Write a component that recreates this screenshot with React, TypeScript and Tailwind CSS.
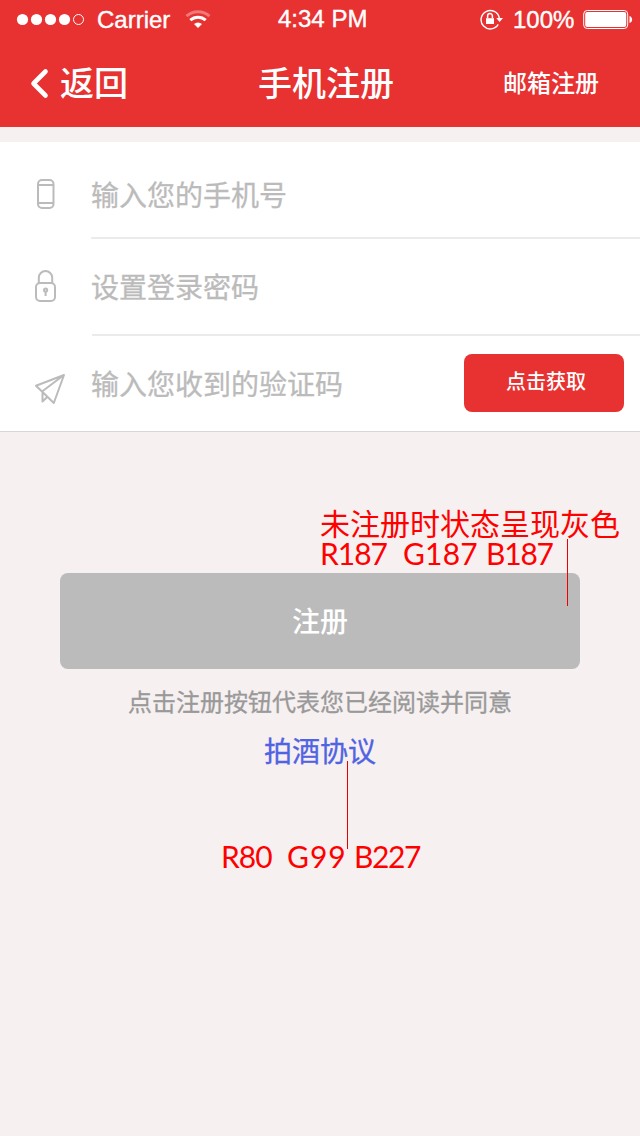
import React from 'react';

function StatusBar() {
  return (
    <div className="flex h-10 items-center whitespace-nowrap font-['Liberation_Sans',sans-serif] text-[24px] leading-[40px]">
      <svg className="ml-4 h-10 w-[70px] shrink-0" viewBox="0 0 70 40" fill="white">
        <circle cx="6.5" cy="19.5" r="5.6" />
        <circle cx="20.5" cy="19.5" r="5.6" />
        <circle cx="34.5" cy="19.5" r="5.6" />
        <circle cx="48.5" cy="19.5" r="5.6" />
        <circle cx="62.5" cy="19.5" r="5" fill="none" stroke="white" />
      </svg>
      <span className="ml-[11px] w-[88px] shrink-0 [-webkit-text-stroke:0.4px_white]">Carrier</span>
      <svg className="h-10 w-[26px] shrink-0" viewBox="0 0 26 40" fill="none" stroke="white">
        <path d="M1.5 16.2a17 17 0 0 1 23 0" strokeWidth="3" opacity=".35" />
        <path d="M5.3 20.2a11.5 11.5 0 0 1 15.4 0" strokeWidth="3" />
        <path d="M9 24.1a6 6 0 0 1 8 0L13 28z" fill="white" stroke="none" />
      </svg>
      <span className="-mt-0.5 ml-[67px] w-[202px] shrink-0 [-webkit-text-stroke:0.4px_white]">4:34 PM</span>
      <svg className="h-10 w-6 shrink-0" viewBox="0 0 24 40" fill="none" stroke="white" strokeWidth="1.4">
        <path d="M18.2 24.4A9.2 9.2 0 1 1 19.3 18" />
        <path d="M16.3 18H23l-3.4 4z" fill="white" stroke="none" />
        <path d="M6 18.2h8v5.8H6z" fill="white" stroke="none" />
        <path d="M7.6 18v-2a2.4 2.4 0 0 1 4.8 0v2" strokeWidth="1.5" />
      </svg>
      <span className="ml-[9px] w-[70px] shrink-0 [-webkit-text-stroke:0.4px_white]">100%</span>
      <svg className="h-10 w-[51px] shrink-0" viewBox="0 0 51 40" fill="white">
        <rect x=".7" y="10.5" width="44" height="18" rx="3.5" fill="none" stroke="white" />
        <rect x="2.2" y="12" width="41" height="15" rx="2" />
        <path d="M46.5 16c3.5 1 3.5 6 0 7z" />
      </svg>
    </div>
  );
}

function PhoneIcon() {
  return (
    <svg className="h-8 w-8" viewBox="0 0 32 32" fill="none" stroke="#bbb" strokeWidth="2">
      <rect x="4" y="2" width="15.5" height="28" rx="4" />
      <path d="M4 7h15.5M4 25h15.5" />
    </svg>
  );
}

function LockIcon() {
  return (
    <svg className="h-9 w-8" viewBox="0 0 32 36" fill="none" stroke="#bbb" strokeWidth="2">
      <rect x="2" y="15" width="19" height="18" rx="4" />
      <path d="M4.8 15V9.7a6.7 6.7 0 0 1 13.4 0V15" />
      <circle cx="11.6" cy="22" r="1.6" />
      <path d="M11.6 23.5V28" />
    </svg>
  );
}

function PlaneIcon() {
  return (
    <svg className="h-8 w-8" viewBox="0 0 32 32" fill="none" stroke="#bbb" strokeWidth="2" strokeLinejoin="round">
      <path d="M2 12.8L30 2 19.8 30 8 18.5zM8 18.5L30 2M8.5 18.5v10l4.7-4.5" />
    </svg>
  );
}

function Field({ icon, children }: { icon: React.ReactNode; children: React.ReactNode }) {
  return (
    <>
      <div className="flex w-[91px] shrink-0 pl-[34px]">{icon}</div>
      <span className="text-[28px] leading-[40px] text-[#bbb] [-webkit-text-stroke:0.3px_#bbb]">{children}</span>
    </>
  );
}

export default function App() {
  return (
    <div className="flex h-[1136px] w-[640px] flex-col overflow-hidden bg-[#f6f0f0] font-['Noto_Sans_CJK_SC',sans-serif] relative">
      <header className="h-[127px] shrink-0 bg-[#e83131] text-white">
        <StatusBar />
        <nav className="flex h-[87px] items-start pt-[17px] font-medium">
          <div className="flex w-[258px] items-center pl-[30px] text-[34px] leading-[50px]">
            <svg className="mr-[11px] h-[50px] w-[19px]" viewBox="0 0 19 50" fill="none" stroke="white" strokeWidth="4.6" strokeLinecap="round" strokeLinejoin="round">
              <path d="M15.5 14.5L3.5 26.5 15.5 38.5" />
            </svg>
            返回
          </div>
          <h1 className="w-[245px] text-[34px] font-medium leading-[50px]">手机注册</h1>
          <span className="text-[24px] leading-[50px]">邮箱注册</span>
        </nav>
      </header>

      <section className="mt-[15px] flex h-[290px] shrink-0 flex-col border-b border-[#d9d6d6] bg-white">
        <div className="flex h-[97px] items-center pt-[7px]">
          <Field icon={<PhoneIcon />}>输入您的手机号</Field>
        </div>
        <div className="ml-[91px] h-0.5 w-[549px] -translate-y-0.5 bg-[#ebebeb]" />
        <div className="flex h-[95px] items-center pb-[6px]">
          <Field icon={<LockIcon />}>设置登录密码</Field>
        </div>
        <div className="ml-[92px] h-0.5 w-[548px] -translate-y-0.5 bg-[#ebebeb]" />
        <div className="flex h-[93px] items-center pb-[4px]">
          <div className="flex w-[91px] shrink-0 pl-[34px] pt-[12px]"><PlaneIcon /></div>
          <span className="w-[373px] text-[28px] leading-[40px] text-[#bbb] [-webkit-text-stroke:0.3px_#bbb]">输入您收到的验证码</span>
          <button className="h-[58px] w-40 rounded-lg bg-[#e83131] pb-[3px] pl-1 text-[20px] font-medium text-white">点击获取</button>
        </div>
      </section>

      <main className="flex flex-col items-center pt-[141px]">
        <button className="h-24 w-[520px] rounded-lg bg-[#bbb] pb-[3px] text-[28px] font-medium text-white">注册</button>
        <p className="mt-[14px] text-[24px] leading-[36px] text-[#999] [-webkit-text-stroke:0.3px_#999]">点击注册按钮代表您已经阅读并同意</p>
        <a className="mt-[11px] text-[28px] leading-[40px] text-[#5063e3] [-webkit-text-stroke:0.3px_#5063e3]">拍酒协议</a>
      </main>

      <div className="absolute left-[320px] top-[502px] whitespace-nowrap text-[30px] text-[#ff0000]">
        <div className="leading-[40px]">未注册时状态呈现灰色</div>
        <div className="-mt-[4px] flex font-['Lato',sans-serif] leading-[30px]">
          <span className="w-[83px] tracking-[-1px]">R187</span>
          <span className="w-[83px] tracking-[0.2px]">G187</span>
          <span className="tracking-[-1.2px]">B187</span>
        </div>
      </div>
      <div className="absolute left-[567px] top-[539px] h-[67px] w-px bg-[#ee0000]" />
      <div className="absolute left-[347px] top-[761px] h-[88px] w-px bg-[#e60000]" />
      <div className="absolute left-[221px] top-[841px] flex whitespace-nowrap font-['Lato',sans-serif] text-[30px] leading-[30px] text-[#ff0000]">
        <span className="w-[66px] tracking-[-1px]">R80</span>
        <span className="w-[67px] tracking-[1px]">G99</span>
        <span className="tracking-[-1.4px]">B227</span>
      </div>
    </div>
  );
}
